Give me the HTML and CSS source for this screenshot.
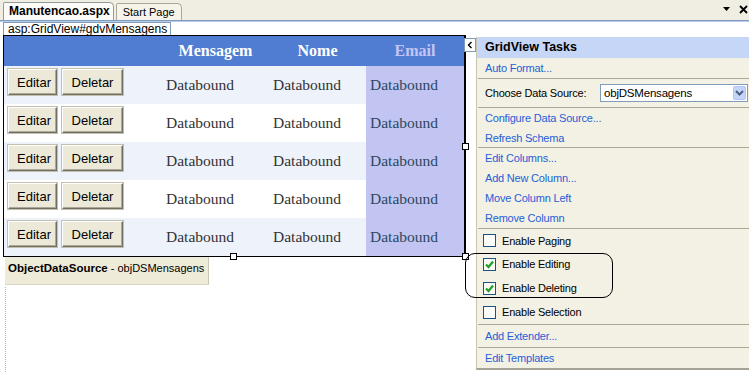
FILE: index.html
```html
<!DOCTYPE html>
<html lang="pt">
<head>
    <meta charset="UTF-8">
    <title>Manutencao.aspx - Designer</title>
    <link rel="stylesheet" href="styles.css">
</head>
<body>
    <div class="tabbar">
        <div class="tab active">Manutencao.aspx</div>
        <div class="tab">Start Page</div>
        <div class="tab-tools">
            <svg width="8" height="5" viewBox="0 0 8 5"><path d="M0 0h7L3.5 4z" fill="#000"/></svg>
            <svg width="9" height="9" viewBox="0 0 9 9"><path d="M1 1l7 7M8 1L1 8" stroke="#000" stroke-width="1.8"/></svg>
        </div>
    </div>
    <div class="strip"></div>

    <div class="workspace">
        <div class="designer">
            <div class="tag">asp:GridView#gdvMensagens</div>
            <div class="grid-box">
                <table class="grid">
                    <colgroup>
                        <col class="c-actions"><col class="c-msg"><col class="c-nome"><col class="c-email">
                    </colgroup>
                    <thead>
                        <tr><th></th><th>Mensagem</th><th>Nome</th><th class="sel">Email</th></tr>
                    </thead>
                    <tbody>
                        <tr class="odd">
                            <td><div class="actions"><button>Editar</button><button>Deletar</button></div></td>
                            <td>Databound</td><td>Databound</td><td class="sel">Databound</td>
                        </tr>
                        <tr>
                            <td><div class="actions"><button>Editar</button><button>Deletar</button></div></td>
                            <td>Databound</td><td>Databound</td><td class="sel">Databound</td>
                        </tr>
                        <tr class="odd">
                            <td><div class="actions"><button>Editar</button><button>Deletar</button></div></td>
                            <td>Databound</td><td>Databound</td><td class="sel">Databound</td>
                        </tr>
                        <tr>
                            <td><div class="actions"><button>Editar</button><button>Deletar</button></div></td>
                            <td>Databound</td><td>Databound</td><td class="sel">Databound</td>
                        </tr>
                        <tr class="odd">
                            <td><div class="actions"><button>Editar</button><button>Deletar</button></div></td>
                            <td>Databound</td><td>Databound</td><td class="sel">Databound</td>
                        </tr>
                    </tbody>
                </table>
            </div>
            <div class="ods"><b>ObjectDataSource</b> - objDSMensagens</div>
            <div class="guide"></div>
        </div>

        <div class="tasks">
            <div class="tasks-title">GridView Tasks</div>
            <a class="task-link">Auto Format...</a>
            <div class="sep"></div>
            <div class="task-source">
                <span>Choose Data Source:</span>
                <div class="select">
                    <span>objDSMensagens</span>
                    <span class="select-btn">
                        <svg width="9" height="6" viewBox="0 0 9 6"><path d="M1 1l3.5 3.5L8 1" fill="none" stroke="#4d6185" stroke-width="2"/></svg>
                    </span>
                </div>
            </div>
            <div class="sep"></div>
            <a class="task-link">Configure Data Source...</a>
            <a class="task-link short">Refresh Schema</a>
            <div class="sep"></div>
            <a class="task-link">Edit Columns...</a>
            <a class="task-link">Add New Column...</a>
            <a class="task-link">Move Column Left</a>
            <a class="task-link">Remove Column</a>
            <div class="sep"></div>
            <label class="task-check first"><span class="box"></span>Enable Paging</label>
            <label class="task-check"><span class="box checked"><svg width="11" height="11" viewBox="0 0 11 11"><path d="M2 5.5l2.5 2.5L9 2.5" fill="none" stroke="#21a121" stroke-width="2.2"/></svg></span>Enable Editing</label>
            <label class="task-check"><span class="box checked"><svg width="11" height="11" viewBox="0 0 11 11"><path d="M2 5.5l2.5 2.5L9 2.5" fill="none" stroke="#21a121" stroke-width="2.2"/></svg></span>Enable Deleting</label>
            <label class="task-check"><span class="box"></span>Enable Selection</label>
            <div class="sep"></div>
            <a class="task-link tall">Add Extender...</a>
            <div class="sep"></div>
            <a class="task-link">Edit Templates</a>
        </div>

        <!-- alças de seleção e smart tag sobre o designer -->
        <span class="handle h-right"></span>
        <span class="handle h-bottom"></span>
        <span class="handle h-corner"></span>
        <span class="smart-tag">
            <svg width="6" height="8" viewBox="0 0 6 8"><path d="M4.5 1L1.5 4l3 3" fill="none" stroke="#000" stroke-width="1.4"/></svg>
        </span>
        <div class="highlight"></div>
    </div>
</body>
</html>
```

FILE: styles.css
```css
body {
    margin: 0;
    width: 749px;
    height: 372px;
    overflow: hidden;
    background: #fff;
    font-family: "Liberation Sans", Arial, sans-serif;
    color: #000;
}
/* Abas do documento */
.tabbar {
    height: 20px;
    background: #f0eee2;
    display: flex;
    align-items: flex-end;
    padding-left: 3px;
    gap: 2px;
}
.tab {
    height: 16px;
    line-height: 16px;
    padding: 0 6px 0 6px;
    font-size: 11px;
    background: #f6f4ea;
    border: 1px solid #aca899;
    border-bottom: none;
    border-radius: 2px 5px 0 0;
    color: #000;
}
.tab.active {
    height: 17px;
    line-height: 17px;
    font-size: 12px;
    font-weight: bold;
    padding: 0 3px 0 5px;
    background: #fcfbf7;
    border-color: #919b9c;
}
.tab-tools {
    margin-left: auto;
    align-self: flex-start;
    display: flex;
    align-items: center;
    gap: 8px;
    padding: 5px 1px 0 0;
}
.strip {
    height: 1px;
    border-top: 1px solid #7f9db9;
    background: #b6caf2;
}
/* Area do designer */
.workspace {
    position: relative;
    display: flex;
    height: 350px;
}
.designer {
    width: 476px;
    display: flex;
    flex-direction: column;
    align-items: flex-start;
}
.tag {
    margin-left: 3px;
    height: 12px;
    line-height: 12px;
    padding: 0 3px 0 4px;
    font-size: 12px;
    background: #fff;
    border: 1px solid #7f9db9;
    border-bottom: none;
}
.grid-box {
    margin-left: 3px;
    width: 460px;
    border: 1px solid #000;
    border-right-width: 2px;
}
.grid {
    border-spacing: 0;
    table-layout: fixed;
    width: 460px;
    font-family: "Liberation Serif", "Times New Roman", serif;
}
.c-actions { width: 158px; }
.c-msg { width: 107px; }
.c-nome { width: 97px; }
.c-email { width: 98px; }
.grid thead tr {
    height: 30px;
}
.grid th {
    background: #507cd1;
    color: #fff;
    font-size: 16px;
    font-weight: bold;
    text-align: center;
    padding: 0;
}
.grid th.sel {
    color: #c3c6f4;
}
.grid tbody tr {
    height: 38px;
}
.grid td {
    padding: 0 4px;
    font-size: 15.5px;
    color: #333;
    vertical-align: middle;
    white-space: nowrap;
}
.grid tr.odd td {
    background: #eef2fb;
}
.grid td.sel,
.grid tr.odd td.sel {
    background: #c2c5f1;
    color: #2c4763;
}
.actions {
    display: flex;
    gap: 5px;
    padding-bottom: 6px;
}
.actions button {
    height: 26px;
    padding: 0 8px;
    font-family: "Liberation Sans", Arial, sans-serif;
    font-size: 13px;
    color: #000;
    background: #ece9d8;
    border: 1px solid;
    border-color: #fff #716f64 #716f64 #fff;
    box-shadow: inset -1px -1px #aca899, 0 0 0 1px #c4c0ae;
}
.actions button:first-child {
    width: 49px;
}
.actions button:last-child {
    width: 61px;
}
.ods {
    margin-left: 5px;
    width: 200px;
    height: 27px;
    line-height: 22px;
    padding-left: 3px;
    font-size: 11px;
    white-space: nowrap;
    background: #eeebd9;
    border-right: 1px solid #c9c5b2;
    border-bottom: 1px solid #d8d4c2;
}
.ods b {
    font-size: 11.5px;
}
.guide {
    margin: 2px 0 0 5px;
    flex: 1;
    border-left: 1px dotted #b5b5b5;
}
/* Painel GridView Tasks */
.tasks {
    margin-top: 15px;
    width: 272px;
    height: 331px;
    background: #f3f1e4;
    border-left: 1px solid #c9c5ae;
    border-bottom: 2px solid #a5a397;
    display: flex;
    flex-direction: column;
    font-size: 11px;
    letter-spacing: -0.2px;
}
.tasks-title {
    height: 21px;
    line-height: 20px;
    padding-left: 8px;
    background: #c6d6f6;
    font-size: 12.5px;
    font-weight: bold;
    letter-spacing: 0;
}
.task-link {
    height: 20px;
    line-height: 20px;
    padding-left: 8px;
    color: #2460d8;
    cursor: pointer;
}
.task-link.short {
    height: 19px;
}
.task-link.tall {
    height: 22px;
    line-height: 22px;
}
.sep {
    height: 1px;
    margin-left: 1px;
    background: #aca899;
}
.task-source {
    height: 28px;
    display: flex;
    align-items: center;
    padding-left: 8px;
    gap: 10px;
}
.select {
    margin-left: auto;
    margin-right: 1px;
    width: 148px;
    height: 18px;
    border: 1px solid #7f9db9;
    background: #fff;
    display: flex;
    align-items: center;
    padding-left: 3px;
    box-sizing: border-box;
    font-size: 11.5px;
}
.select-btn {
    margin-left: auto;
    margin-right: 1px;
    width: 13px;
    height: 14px;
    border-radius: 2px;
    background: #c4d4fa;
    border: 1px solid #b1c5f4;
    box-sizing: border-box;
    display: flex;
    align-items: center;
    justify-content: center;
}
.task-check {
    height: 24px;
    display: flex;
    align-items: center;
    padding-left: 6px;
    gap: 6px;
}
.task-check.first {
    height: 23px;
}
.box {
    width: 11px;
    height: 11px;
    border: 1px solid #1c5180;
    background: #fcfcfb;
    display: flex;
    align-items: center;
    justify-content: center;
}
/* Sobreposicoes */
.handle {
    position: absolute;
    width: 5px;
    height: 5px;
    background: #fff;
    border: 1px solid #000;
}
.h-right { left: 462px; top: 121px; }
.h-bottom { left: 230px; top: 231px; }
.h-corner { left: 462px; top: 231px; }
.smart-tag {
    position: absolute;
    left: 464px;
    top: 16px;
    width: 10px;
    height: 12px;
    background: #fff;
    border: 1px solid #7f9db9;
    display: flex;
    align-items: center;
    justify-content: center;
}
.highlight {
    position: absolute;
    left: 465px;
    top: 231px;
    width: 146px;
    height: 43px;
    border: 1px solid #000;
    border-radius: 10px;
}
```
